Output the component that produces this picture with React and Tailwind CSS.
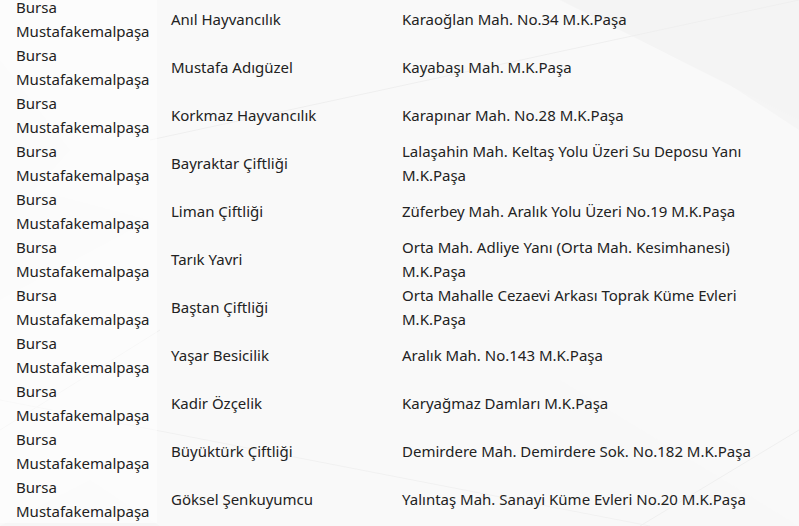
const rows = [
  ['Anıl Hayvancılık', ['Karaoğlan Mah. No.34 M.K.Paşa']],
  ['Mustafa Adıgüzel', ['Kayabaşı Mah. M.K.Paşa']],
  ['Korkmaz Hayvancılık', ['Karapınar Mah. No.28 M.K.Paşa']],
  ['Bayraktar Çiftliği', ['Lalaşahin Mah. Keltaş Yolu Üzeri Su Deposu Yanı', 'M.K.Paşa']],
  ['Liman Çiftliği', ['Züferbey Mah. Aralık Yolu Üzeri No.19 M.K.Paşa']],
  ['Tarık Yavri', ['Orta Mah. Adliye Yanı (Orta Mah. Kesimhanesi)', 'M.K.Paşa']],
  ['Baştan Çiftliği', ['Orta Mahalle Cezaevi Arkası Toprak Küme Evleri', 'M.K.Paşa']],
  ['Yaşar Besicilik', ['Aralık Mah. No.143 M.K.Paşa']],
  ['Kadir Özçelik', ['Karyağmaz Damları M.K.Paşa']],
  ['Büyüktürk Çiftliği', ['Demirdere Mah. Demirdere Sok. No.182 M.K.Paşa']],
  ['Göksel Şenkuyumcu', ['Yalıntaş Mah. Sanayi Küme Evleri No.20 M.K.Paşa']],
]

function Backdrop() {
  return (
    <svg className="absolute inset-0 w-full h-full" viewBox="0 0 799 526" preserveAspectRatio="none">
      <rect width="799" height="526" fill="#f9f9f9" />
      <polygon points="0,0 799,0 799,130 600,0" fill="#f5f5f5" />
      <polygon points="560,0 799,120 799,0" fill="#f4f4f4" />
      <polygon points="0,60 70,150 0,230" fill="#f6f6f6" />
      <polygon points="0,300 150,220 0,180" fill="#f7f7f7" />
      <polygon points="0,526 90,480 160,526" fill="#f6f6f6" />
      <polygon points="560,380 799,526 560,526" fill="#f8f8f8" />
      <line x1="150" y1="140" x2="799" y2="0" stroke="#efefef" strokeWidth="1" />
      <line x1="0" y1="430" x2="160" y2="330" stroke="#efefef" strokeWidth="1" />
      <line x1="0" y1="400" x2="650" y2="526" stroke="#f1f1f1" strokeWidth="1" />
      <line x1="640" y1="526" x2="799" y2="430" stroke="#efefef" strokeWidth="1" />
    </svg>
  )
}

export default function App() {
  return (
    <div
      className="relative w-[799px] h-[526px] overflow-hidden text-[15px] leading-6 text-[#222]"
      style={{ fontFamily: '"Noto Sans", "Open Sans", sans-serif' }}
    >
      <Backdrop />
      <table className="relative -mt-[5px] border-collapse">
        <tbody>
          {rows.map(([name, addr], i) => (
            <tr key={i} className="h-12">
              <td className="w-[157px] pl-4 align-middle bg-white/50">
                <div>Bursa</div>
                <div>Mustafakemalpaşa</div>
              </td>
              <td className="w-[231px] pl-[14px] align-middle">{name}</td>
              <td className="pl-[14px] align-middle">
                {addr.map((a, j) => (
                  <div key={j}>{a}</div>
                ))}
              </td>
            </tr>
          ))}
        </tbody>
      </table>
    </div>
  )
}
